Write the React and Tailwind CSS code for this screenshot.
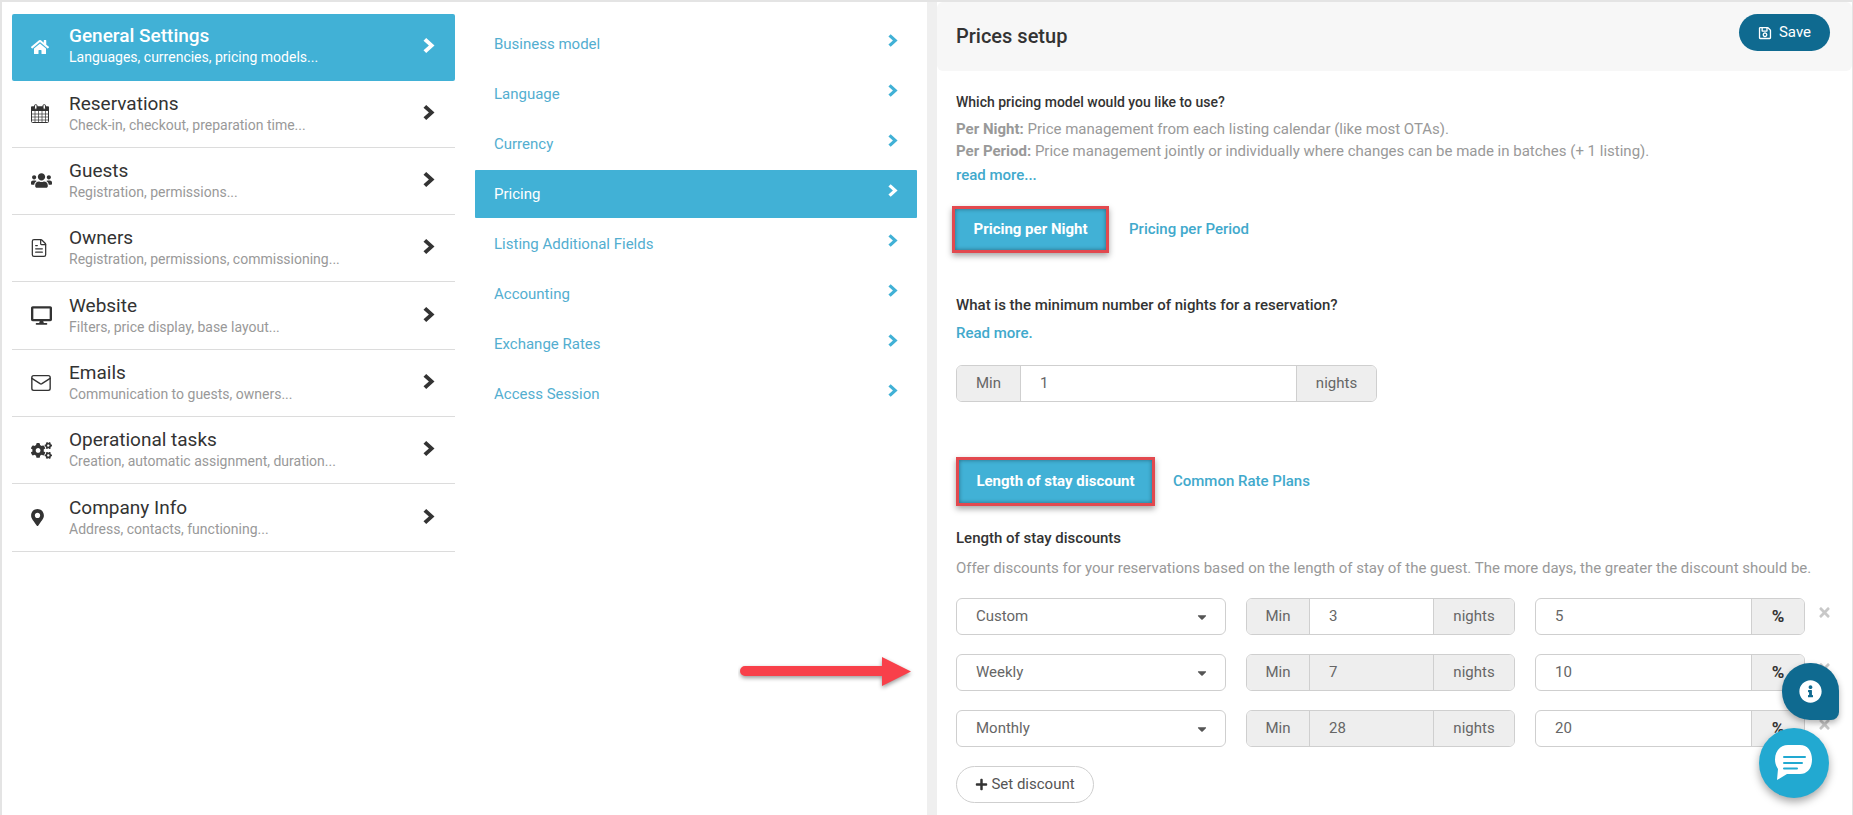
import {
  FaHome,
  FaUsers,
  FaDesktop,
  FaCogs,
  FaMapMarkerAlt,
  FaRegSave,
  FaPlus,
  FaTimes,
  FaInfoCircle,
  FaCaretDown,
} from 'react-icons/fa';
import { FileText, Mail } from 'lucide-react';

const mainMenu = [
  { title: 'General Settings', sub: 'Languages, currencies, pricing models...', icon: <FaHome className="text-[18px]" />, active: true },
  { title: 'Reservations', sub: 'Check-in, checkout, preparation time...', icon: <CalendarIcon /> },
  { title: 'Guests', sub: 'Registration, permissions...', icon: <FaUsers className="text-[21px]" /> },
  { title: 'Owners', sub: 'Registration, permissions, commissioning...', icon: <FileText size={20} strokeWidth={1.5} className="-ml-[2px]" /> },
  { title: 'Website', sub: 'Filters, price display, base layout...', icon: <FaDesktop className="text-[21px]" /> },
  { title: 'Emails', sub: 'Communication to guests, owners...', icon: <Mail size={22} strokeWidth={1.5} className="-ml-[1px]" /> },
  { title: 'Operational tasks', sub: 'Creation, automatic assignment, duration...', icon: <FaCogs className="text-[21px]" /> },
  { title: 'Company Info', sub: 'Address, contacts, functioning...', icon: <FaMapMarkerAlt className="-ml-[2px] text-[17px]" /> },
];

const subMenu = [
  'Business model',
  'Language',
  'Currency',
  'Pricing',
  'Listing Additional Fields',
  'Accounting',
  'Exchange Rates',
  'Access Session',
];

const discounts = [
  { type: 'Custom', min: '3', pct: '5', locked: false },
  { type: 'Weekly', min: '7', pct: '10', locked: true },
  { type: 'Monthly', min: '28', pct: '20', locked: true },
];

function CalendarIcon() {
  return (
    <svg width="18" height="19" viewBox="0 0 18 19" fill="none" stroke="currentColor">
      <rect x="0.5" y="3" width="17" height="15.5" rx="1" />
      <rect x="0.5" y="3" width="17" height="3.5" fill="currentColor" />
      <path d="M4 6.5v12M7.5 6.5v12M11 6.5v12M14.500 6.5v12M0.5 10h17M0.5 13h17M0.5 16h17" strokeWidth="0.7" />
      <rect x="3.5" y="0.7" width="2.5" height="4.5" rx="1" fill="#fff" />
      <rect x="12" y="0.7" width="2.5" height="4.5" rx="1" fill="#fff" />
    </svg>
  );
}

function Chevron({ className = '', width = 12, height = 15 }) {
  return (
    <svg className={className} width={width} height={height} viewBox="0 0 12 15" fill="currentColor">
      <path d="M3.2 0 L11.500 7.500 L3.2 15 L0.500 12.300 L5.900 7.500 L0.500 2.700 Z" />
    </svg>
  );
}

function Addon({ children, className = '' }) {
  return (
    <div className={`flex items-center justify-center bg-[#eeeeee] text-[15px] text-[#666] ${className}`}>
      {children}
    </div>
  );
}

function TabButton({ children }) {
  return (
    <button className="border-[3px] border-[#e2494f] bg-[#41b1d6] text-[15px] font-bold text-white shadow-[0_3px_6px_rgba(0,0,0,0.35),inset_0_0_4px_rgba(0,0,0,0.4)]">
      {children}
    </button>
  );
}

export default function App() {
  return (
    <div className="relative flex h-[815px] w-full overflow-hidden border-t-2 border-l-2 border-[#e4e4e4] bg-white font-['Roboto',sans-serif] text-[#333]">
      {/* Main menu */}
      <ul className="w-[443px] shrink-0 ml-[10px] pt-3">
        {mainMenu.map((m) => (
          <li
            key={m.title}
            className={`flex items-center ${
              m.active
                ? 'h-[66.5px] rounded-[2px] bg-[#41b1d6] text-white'
                : 'h-[67.33px] border-b border-[#dcdcdc] text-[#333]'
            }`}
          >
            <span className="flex w-[57px] shrink-0 justify-start pl-[19px]">{m.icon}</span>
            <div className={`flex-1 ${m.active ? 'pb-[3px]' : 'pb-px'}`}>
              <div className={`text-[19px] leading-[24px] ${m.active ? 'font-medium' : ''}`}>{m.title}</div>
              <div className={`text-[14px] leading-[19px] ${m.active ? 'text-white' : 'text-[#999]'}`}>{m.sub}</div>
            </div>
            <Chevron className={`mr-5 mb-[3px] ${m.active ? 'text-white' : 'text-[#333]'}`} />
          </li>
        ))}
      </ul>

      {/* Sub menu */}
      <ul className="ml-5 flex w-[442px] shrink-0 flex-col gap-[2px] pt-[18px]">
        {subMenu.map((s) => (
          <li
            key={s}
            className={`flex h-[48px] items-center justify-between rounded-[1px] pl-[19px] pr-[19px] text-[15px] ${
              s === 'Pricing' ? 'bg-[#41b1d6] text-white' : 'text-[#53aed0]'
            }`}
          >
            <span className="mt-px">{s}</span>
            <Chevron width={10} height={13} className={`mb-[7px] ${s === 'Pricing' ? 'text-white' : 'text-[#41b1d6]'}`} />
          </li>
        ))}
      </ul>

      {/* Gutter + panel */}
      <div className="ml-[10px] w-[10px] shrink-0 bg-[#efefef]" />
      <main className="flex-1">
        <header className="flex h-[69px] items-start justify-between rounded-[6px] bg-[#f7f7f7] pl-[19px] pr-[22px]">
          <h1 className="mt-[22px] text-[20px] leading-6 font-medium text-[#333]">Prices setup</h1>
          <button className="mt-3 flex h-[37px] w-[91px] items-center justify-center gap-[7px] rounded-full bg-[#0f6a90] text-[15px] text-white">
            <FaRegSave className="text-[14px]" />
            Save
          </button>
        </header>

        <div className="pl-[19px] pr-5">
          <p className="mt-[21px] text-[14px] leading-5 font-medium text-[#333]">Which pricing model would you like to use?</p>
          <p className="mt-[6px] text-[15px] leading-[22px] text-[#999]">
            <b className="font-bold">Per Night:</b> Price management from each listing calendar (like most OTAs).
            <br />
            <b className="font-bold">Per Period:</b> Price management jointly or individually where changes can be made in batches (+ 1 listing).
          </p>
          <a className="mt-[2px] block text-[15px] leading-[22px] font-medium text-[#41a9cc]">read more...</a>

          <div className="mt-[20px] flex h-[47px] items-stretch">
            <div className="ml-[-4px] flex">
              <TabButton>
                <span className="block w-[151px]">Pricing per Night</span>
              </TabButton>
            </div>
            <a className="ml-5 self-center text-[15px] font-medium text-[#41a9cc]">Pricing per Period</a>
          </div>

          <p className="mt-[42px] text-[15px] leading-5 font-medium text-[#333]">What is the minimum number of nights for a reservation?</p>
          <a className="mt-2 block text-[15px] leading-5 font-medium text-[#41a9cc]">Read more.</a>

          <div className="mt-[22px] flex h-[37px] w-[421px] overflow-hidden rounded-[6px] border border-[#cfcfcf]">
            <Addon className="w-[64px] border-r border-[#cfcfcf]">Min</Addon>
            <div className="flex flex-1 items-center pl-[19px] text-[15px] text-[#666]">1</div>
            <Addon className="w-[80px] border-l border-[#cfcfcf]">nights</Addon>
          </div>

          <div className="mt-[55px] flex h-[49px] items-stretch">
            <TabButton>
              <span className="block w-[193px]">Length of stay discount</span>
            </TabButton>
            <a className="ml-[18px] self-center text-[15px] font-medium text-[#41a9cc]">Common Rate Plans</a>
          </div>

          <p className="mt-[22px] text-[15px] leading-5 font-medium text-[#333]">Length of stay discounts</p>
          <p className="mt-[10px] text-[15px] leading-5 text-[#999]">
            Offer discounts for your reservations based on the length of stay of the guest. The more days, the greater the discount should be.
          </p>

          <div className="mt-[20px] flex flex-col gap-[19px]">
            {discounts.map((d) => (
              <div key={d.type} className="flex h-[37px] items-stretch text-[15px] text-[#666]">
                <div className="flex w-[270px] items-center justify-between rounded-[6px] border border-[#cfcfcf] pl-[19px] pr-4">
                  <span>{d.type}</span>
                  <FaCaretDown className="text-[14px] text-[#555]" />
                </div>
                <div className="ml-5 flex w-[269px] overflow-hidden rounded-[6px] border border-[#cfcfcf]">
                  <Addon className="w-[63px] border-r border-[#cfcfcf]">Min</Addon>
                  <div className={`flex flex-1 items-center pl-[19px] ${d.locked ? 'bg-[#eeeeee]' : ''}`}>{d.min}</div>
                  <Addon className="w-[81px] border-l border-[#cfcfcf]">nights</Addon>
                </div>
                <div className="ml-5 flex w-[270px] overflow-hidden rounded-[6px] border border-[#cfcfcf]">
                  <div className="flex flex-1 items-center pl-[19px]">{d.pct}</div>
                  <Addon className="w-[53px] border-l border-[#cfcfcf] !text-[17px] font-bold !text-[#333]">%</Addon>
                </div>
                <FaTimes className="ml-[12px] mt-[7px] text-[15px] text-[#c8c8c8]" />
              </div>
            ))}
          </div>

          <button className="mt-[19px] flex h-[37px] w-[138px] items-center justify-center gap-[3px] rounded-full border border-[#cfcfcf] text-[15px] text-[#555]">
            <FaPlus className="text-[13px] text-[#333]" />
            Set discount
          </button>
        </div>
      </main>
      <div className="w-[2px] shrink-0 bg-[#e4e4e4]" />

      {/* Annotation arrow */}
      <svg className="absolute left-[736px] top-[651px]" width="180" height="40" viewBox="0 0 180 40">
        <path
          d="M7 13 H144 V4 L173 18.500 L144 33 V23 H7 a5 5 0 0 1 0 -10z"
          fill="#f8404a"
          style={{ filter: 'drop-shadow(0 2px 2px rgba(0,0,0,0.4))' }}
        />
      </svg>

      {/* Floating help buttons */}
      <button className="absolute left-[1780px] top-[661px] flex h-[57px] w-[57px] items-center justify-center rounded-[28px] rounded-br-[8px] bg-[#0f6a90] text-[23px] text-white shadow-[0_3px_6px_rgba(0,0,0,0.3)]">
        <FaInfoCircle />
      </button>
      <button className="absolute left-[1757px] top-[726px] flex h-[70px] w-[70px] items-center justify-center rounded-full bg-[#22a9d1] shadow-[0_4px_8px_rgba(0,0,0,0.35)]">
        <svg width="38" height="36" viewBox="0 0 38 36">
          <path
            d="M13 0h12c7.500 0 12 6 12 14.500S32.500 29 25 29H12L2 35l1-11C1 21 0 18 0 14.500 0 6 5.500 0 13 0z"
            fill="#fff"
          />
          <path d="M9 12h21M9 18h18M9 23.500h13" stroke="#22a9d1" strokeWidth="2" strokeLinecap="round" />
        </svg>
      </button>
    </div>
  );
}
